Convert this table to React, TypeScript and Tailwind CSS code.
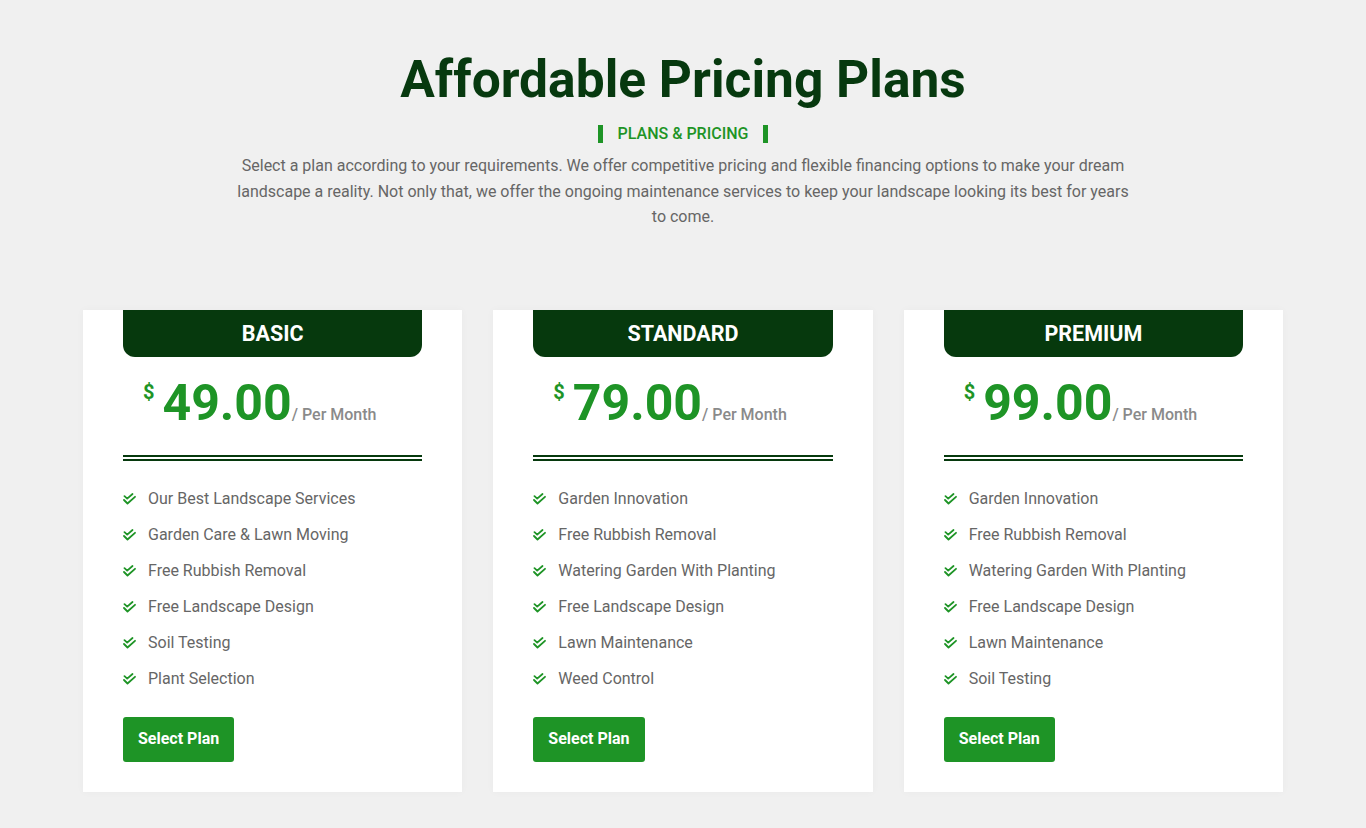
const plans = [
  {
    name: "BASIC",
    price: "49.00",
    features: [
      "Our Best Landscape Services",
      "Garden Care & Lawn Moving",
      "Free Rubbish Removal",
      "Free Landscape Design",
      "Soil Testing",
      "Plant Selection",
    ],
  },
  {
    name: "STANDARD",
    price: "79.00",
    features: [
      "Garden Innovation",
      "Free Rubbish Removal",
      "Watering Garden With Planting",
      "Free Landscape Design",
      "Lawn Maintenance",
      "Weed Control",
    ],
  },
  {
    name: "PREMIUM",
    price: "99.00",
    features: [
      "Garden Innovation",
      "Free Rubbish Removal",
      "Watering Garden With Planting",
      "Free Landscape Design",
      "Lawn Maintenance",
      "Soil Testing",
    ],
  },
];

function CheckDouble() {
  return (
    <svg width="13" height="12" viewBox="0 0 13 12" fill="none" stroke="#1e9426" strokeWidth={1.8} strokeLinecap="round" strokeLinejoin="round">
      <path d="M1.5 3.2 L4.2 5.6 L9.5 1" />
      <path d="M1 7 L4.5 10.5 L12 3.8" />
    </svg>
  );
}

export default function App() {
  return (
    <div className="min-h-screen bg-[#f0f0f0] pt-[50px] pb-[36px] font-['Roboto',sans-serif]">
      <div className="text-center">
        <h1 className="text-[51.5px] leading-[60px] font-bold text-[#07390f]">
          Affordable Pricing Plans
        </h1>
        <div className="mt-[12px] flex items-center justify-center gap-[15px]">
          <span className="h-[18px] w-[5px] bg-[#1e9426]" />
          <span className="text-[16px] leading-[24px] font-medium text-[#1e9426]">
            PLANS &amp; PRICING
          </span>
          <span className="h-[18px] w-[5px] bg-[#1e9426]" />
        </div>
        <p className="mx-auto mt-[7px] w-[900px] text-[16px] leading-[25.5px] text-[#666666]">
          Select a plan according to your requirements. We offer competitive pricing and flexible financing options to make your dream landscape a reality. Not only that, we offer the ongoing maintenance services to keep your landscape looking its best for years to come.
        </p>
      </div>

      <div className="mx-auto mt-[80px] grid w-[1200px] grid-cols-3 gap-[31px]">
        {plans.map((plan) => (
          <div key={plan.name} className="bg-white px-[40px] pb-[30px] shadow-[0_0_8px_rgba(0,0,0,0.03)]">
            <div className="flex h-[47px] items-center justify-center rounded-b-[12px] bg-[#06390d] pt-[3px] text-[21.5px] font-bold text-white">
              {plan.name}
            </div>
            <div className="mt-[16px] flex items-baseline pl-[20px]">
              <span className="mt-[9px] self-start text-[20px] leading-[20px] font-bold text-[#1e9426]">$</span>
              <span className="ml-[8px] text-[50px] leading-[60px] font-bold text-[#1e9426]">{plan.price}</span>
              <span className="text-[16px] font-medium text-[#8a8a8a]">/ Per Month</span>
            </div>
            <div className="mt-[22px] h-[6px] border-y-2 border-[#06390d]" />
            <ul className="mt-[26px] flex flex-col gap-[12px]">
              {plan.features.map((f) => (
                <li key={f} className="flex items-center gap-[12px] text-[16px] leading-[24px] text-[#666666]">
                  <CheckDouble />
                  {f}
                </li>
              ))}
            </ul>
            <button className="mt-[26px] h-[45px] rounded-[3px] bg-[#1e9426] px-[15px] text-[16px] font-bold text-white">
              Select Plan
            </button>
          </div>
        ))}
      </div>
    </div>
  );
}
